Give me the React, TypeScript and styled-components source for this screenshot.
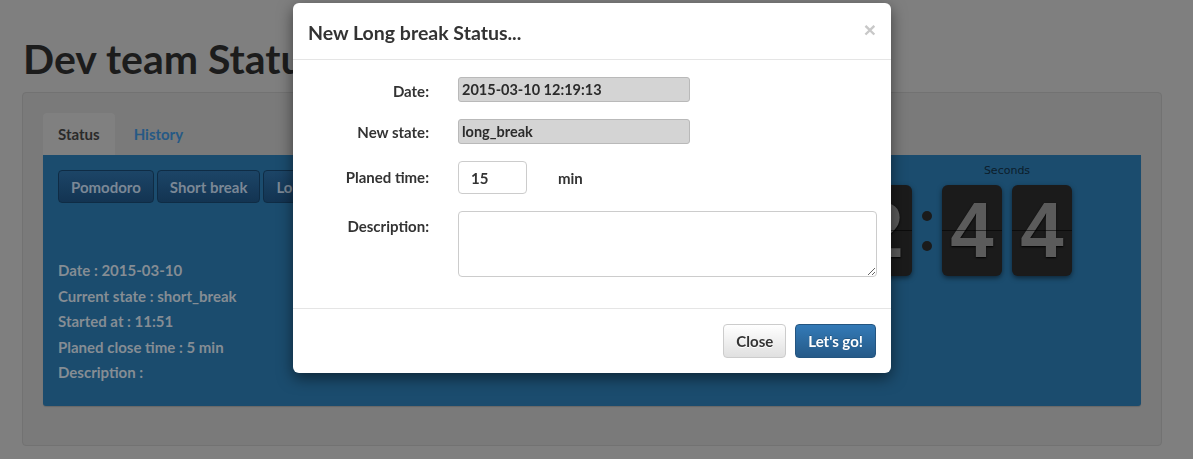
import React from "react";
import styled, { createGlobalStyle } from "styled-components";

const Global = createGlobalStyle`
  html, body { margin: 0; padding: 0; }
  body {
    background: #7f7f7f;
    font-family: Lato, "Open Sans", sans-serif;
    font-size: 15px;
    color: #1f1f1f;
    width: 1193px;
    height: 459px;
    overflow: hidden;
  }
  * { box-sizing: border-box; }
`;

const Page = styled.div`
  padding: 38px 31px 0 22px;
`;

const Title = styled.h1`
  margin: 0 0 12px 1px;
  font-size: 41px;
  line-height: 42px;
  font-weight: 700;
  color: #1c1c1c;
`;

const Well = styled.div`
  background: #7a7a7a;
  border: 1px solid #727272;
  border-radius: 4px;
  padding: 20px 20px 40px 20px;
  height: 354px;
`;

const Tabs = styled.div`
  display: flex;
  height: 42px;
`;

const Tab = styled.div<{ $active?: boolean }>`
  padding: 0 15px;
  display: flex;
  align-items: center;
  font-weight: 700;
  font-size: 15px;
  border-radius: 4px 4px 0 0;
  background: ${(p) => (p.$active ? "#808080" : "transparent")};
  color: ${(p) => (p.$active ? "#2a2a2a" : "#265985")};
  margin-right: 4px;
`;

const Panel = styled.div`
  background: #1b4c6e;
  border-radius: 0 0 3px 3px;
  height: 251px;
  padding: 15px;
  display: flex;
  justify-content: space-between;
  box-shadow: 0 1px 1px rgba(0, 0, 0, 0.15);
`;

const LeftCol = styled.div`
  display: flex;
  flex-direction: column;
`;

const BtnRow = styled.div`
  display: flex;
  gap: 3px;
`;

const DarkBtn = styled.div`
  height: 33px;
  padding: 0 12px;
  display: flex;
  align-items: center;
  border: 1px solid #0f2c45;
  border-radius: 4px;
  background: linear-gradient(#1c4567, #133452);
  color: #7b8896;
  font-weight: 700;
  font-size: 15px;
`;

const Info = styled.div`
  margin-top: 55px;
  display: flex;
  flex-direction: column;
`;

const InfoLine = styled.div`
  height: 25.5px;
  line-height: 25.5px;
  color: #858d94;
  font-weight: 700;
  font-size: 15px;
`;

const Clock = styled.div`
  display: flex;
  align-items: flex-start;
  margin-right: 54px;
  margin-top: -8px;
`;

const Group = styled.div`
  display: flex;
  flex-direction: column;
  align-items: center;
`;

const GroupLabel = styled.div`
  font-family: "DejaVu Sans", sans-serif;
  font-size: 11px;
  color: #0c1d2b;
  height: 16px;
  line-height: 18px;
  margin-bottom: 7px;
`;

const Cards = styled.div`
  display: flex;
  gap: 10px;
`;

const Card = styled.div`
  position: relative;
  width: 60px;
  height: 91px;
  border-radius: 6px;
  background: #1b1b1b;
  box-shadow: 0 2px 5px rgba(0, 0, 0, 0.5);
  display: flex;
  align-items: center;
  justify-content: center;
  font-family: "Liberation Sans", Arial, sans-serif;
  font-weight: 700;
  font-size: 78px;
  color: #5b5b5b;
  text-shadow: 0 1px 2px #000;
  overflow: hidden;
  &::after {
    content: "";
    position: absolute;
    left: 0;
    right: 0;
    top: 45px;
    height: 1px;
    background: rgba(0, 0, 0, 0.55);
  }
`;

const Colon = styled.div`
  width: 30px;
  height: 91px;
  margin-top: 23px;
  display: flex;
  flex-direction: column;
  align-items: center;
  justify-content: center;
  gap: 20px;
`;

const Dot = styled.span`
  width: 10px;
  height: 10px;
  border-radius: 50%;
  background: #1b1b1b;
`;

/* Modal */
const Modal = styled.div`
  position: fixed;
  left: 293px;
  top: 3px;
  width: 598px;
  background: #fff;
  border-radius: 6px;
  box-shadow: 0 5px 15px rgba(0, 0, 0, 0.5);
  color: #333;
`;

const ModalHeader = styled.div`
  height: 57px;
  padding: 0 15px;
  display: flex;
  align-items: center;
  justify-content: space-between;
  border-bottom: 1px solid #e5e5e5;
`;

const ModalTitle = styled.h4`
  margin: 2px 0 0 0;
  font-size: 19.5px;
  font-weight: 700;
  color: #333;
`;

const CloseX = styled.span`
  font-family: "Liberation Sans", Arial, sans-serif;
  font-size: 21px;
  font-weight: 700;
  color: #c8c8c8;
  margin-top: -3px;
`;

const ModalBody = styled.div`
  padding: 17px 15px 31px 15px;
  display: flex;
  flex-direction: column;
  gap: 17px;
`;

const FormRow = styled.div`
  display: grid;
  grid-template-columns: 121px 1fr;
  column-gap: 29px;
  align-items: start;
`;

const Label = styled.label<{ $pt: number }>`
  text-align: right;
  font-weight: 700;
  font-size: 15px;
  color: #333;
  padding-top: ${(p) => p.$pt}px;
`;

const Field = styled.div`
  display: flex;
  align-items: center;
`;

const ReadOnly = styled.div<{ $w: number }>`
  width: ${(p) => p.$w}px;
  height: 25px;
  background: #d4d4d4;
  border: 1px solid #b9b9b9;
  border-radius: 3px;
  padding: 0 3px;
  display: flex;
  align-items: center;
  font-weight: 700;
  font-size: 14.5px;
  color: #2b2b2b;
`;

const NumInput = styled.input`
  width: 69px;
  height: 33px;
  border: 1px solid #ccc;
  border-radius: 4px;
  padding: 0 12px;
  font-family: Lato, sans-serif;
  font-weight: 700;
  font-size: 15px;
  color: #333;
  outline: none;
`;

const Unit = styled.span`
  margin-left: 31px;
  font-weight: 700;
  font-size: 15px;
  color: #333;
`;

const TextArea = styled.textarea`
  width: 419px;
  height: 66px;
  border: 1px solid #ccc;
  border-radius: 4px;
  outline: none;
  display: block;
  margin: 0;
`;

const ModalFooter = styled.div`
  border-top: 1px solid #e5e5e5;
  padding: 15px 15px 15px 15px;
  display: flex;
  justify-content: flex-end;
  gap: 9px;
`;

const Btn = styled.div<{ $primary?: boolean }>`
  height: 34px;
  padding: 0 12px;
  display: flex;
  align-items: center;
  border-radius: 4px;
  font-weight: 700;
  font-size: 15px;
  border: 1px solid ${(p) => (p.$primary ? "#245580" : "#ccc")};
  color: ${(p) => (p.$primary ? "#fff" : "#333")};
  background: ${(p) =>
    p.$primary
      ? "linear-gradient(#337ab7, #265a88)"
      : "linear-gradient(#fff, #e0e0e0)"};
  text-shadow: ${(p) => (p.$primary ? "0 -1px 0 rgba(0,0,0,.2)" : "0 1px 0 #fff")};
`;

export default function App() {
  return (
    <>
      <Global />
      <Page>
        <Title>Dev team Status</Title>
        <Well>
          <Tabs>
            <Tab $active>Status</Tab>
            <Tab>History</Tab>
          </Tabs>
          <Panel>
            <LeftCol>
              <BtnRow>
                <DarkBtn>Pomodoro</DarkBtn>
                <DarkBtn>Short break</DarkBtn>
                <DarkBtn>Long break</DarkBtn>
              </BtnRow>
              <Info>
                <InfoLine>Date : 2015-03-10</InfoLine>
                <InfoLine>Current state : short_break</InfoLine>
                <InfoLine>Started at : 11:51</InfoLine>
                <InfoLine>Planed close time : 5 min</InfoLine>
                <InfoLine>Description :</InfoLine>
              </Info>
            </LeftCol>
            <Clock>
              <Group>
                <GroupLabel>Minutes</GroupLabel>
                <Cards>
                  <Card>0</Card>
                  <Card>2</Card>
                </Cards>
              </Group>
              <Colon>
                <Dot />
                <Dot />
              </Colon>
              <Group>
                <GroupLabel>Seconds</GroupLabel>
                <Cards>
                  <Card>4</Card>
                  <Card>4</Card>
                </Cards>
              </Group>
            </Clock>
          </Panel>
        </Well>
      </Page>
      <Modal>
        <ModalHeader>
          <ModalTitle>New Long break Status...</ModalTitle>
          <CloseX>×</CloseX>
        </ModalHeader>
        <ModalBody>
          <FormRow>
            <Label $pt={5}>Date:</Label>
            <Field>
              <ReadOnly $w={232}>2015-03-10 12:19:13</ReadOnly>
            </Field>
          </FormRow>
          <FormRow>
            <Label $pt={4}>New state:</Label>
            <Field>
              <ReadOnly $w={232}>long_break</ReadOnly>
            </Field>
          </FormRow>
          <FormRow>
            <Label $pt={7}>Planed time:</Label>
            <Field>
              <NumInput defaultValue="15" />
              <Unit>min</Unit>
            </Field>
          </FormRow>
          <FormRow>
            <Label $pt={6}>Description:</Label>
            <Field>
              <TextArea />
            </Field>
          </FormRow>
        </ModalBody>
        <ModalFooter>
          <Btn>Close</Btn>
          <Btn $primary>Let's go!</Btn>
        </ModalFooter>
      </Modal>
    </>
  );
}
